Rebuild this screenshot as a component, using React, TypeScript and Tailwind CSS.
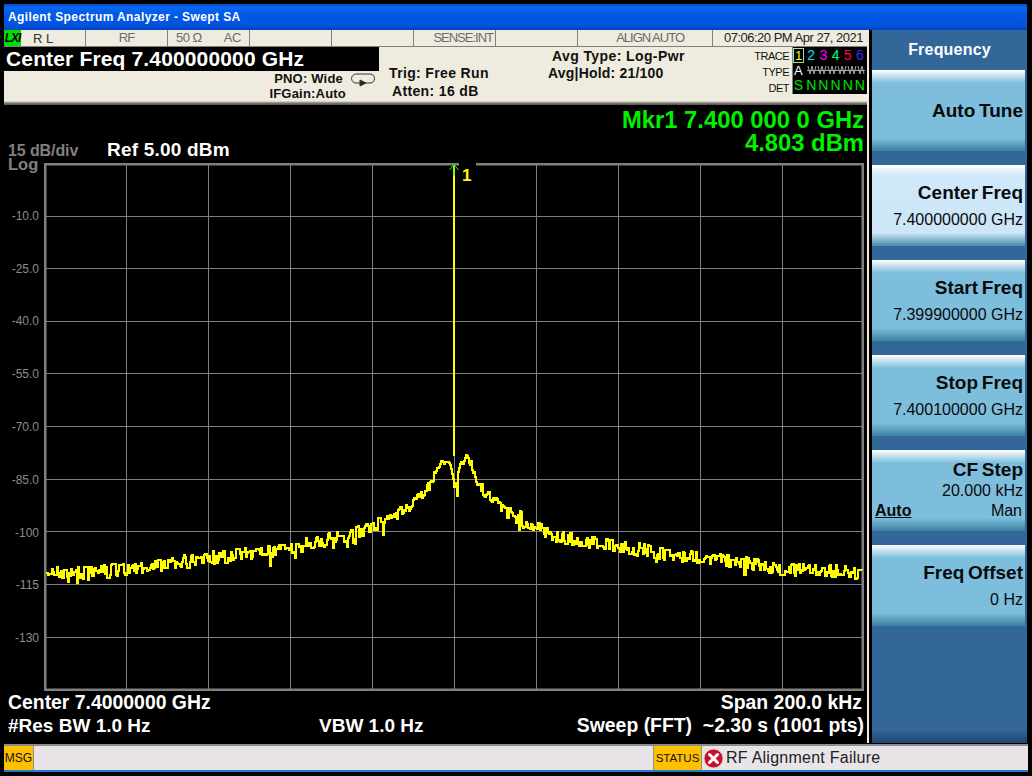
import React from "react";

const TOP = 163;
const LEFT = 44;

// envelope of the trace, in page coordinates
const envelope: [number, number][] = [
  [46, 573], [100, 572], [150, 566], [200, 559], [250, 553], [300, 546], [340, 537], [375, 526],
  [400, 512], [415, 500], [425, 490], [432, 480], [437, 466], [440, 458], [445, 460], [449, 466],
  [452, 480], [456, 480], [459, 466], [463, 458], [468, 459], [471, 466], [476, 482], [482, 492],
  [490, 500], [505, 512], [525, 523], [550, 535], [580, 541], [620, 547], [660, 553], [700, 558],
  [740, 563], [780, 569], [820, 571], [862, 573],
];

function envAt(x: number) {
  for (let i = 0; i < envelope.length - 1; i++) {
    const [x0, y0] = envelope[i];
    const [x1, y1] = envelope[i + 1];
    if (x >= x0 && x <= x1) return y0 + ((y1 - y0) * (x - x0)) / (x1 - x0);
  }
  return 573;
}

function buildTrace() {
  let seed = 71;
  const rand = () => {
    seed = (seed * 16807) % 2147483647;
    return seed / 2147483647;
  };
  let d = `M2 ${envAt(46) - TOP}`;
  let n = 0;
  for (let x = 46; x < 862; x += 1) {
    const central = x > 436 && x < 472;
    // hold the last value now and then, the real trace is blocky
    if (rand() > 0.3) {
      n = (rand() - 0.5) * (central ? 10 : 13);
      if (!central && rand() > 0.9) n += rand() * 16 - 4;
      if (central && rand() > 0.8) n += rand() * 16;
    }
    d += `H${x - LEFT + 1}V${(envAt(x) + n - TOP).toFixed(1)}`;
  }
  return d;
}

const trace = buildTrace();
const vLines = [82, 164, 246, 328, 410, 492, 574, 656, 738];
const hLines = [53, 105, 158, 210, 263, 316, 368, 421, 474];
const yLabels = ["-10.0", "-25.0", "-40.0", "-55.0", "-70.0", "-85.0", "-100", "-115", "-130", ""];

function Softkey({
  title,
  value,
  selected,
  children,
}: {
  title: string;
  value?: string;
  selected?: boolean;
  children?: React.ReactNode;
}) {
  const bg = selected
    ? "bg-[linear-gradient(#ffffff_0px,#cfe8fa_11px,#cce6f8_68px,#4f93b0_80px)]"
    : "bg-[linear-gradient(#ffffff_0px,#7dbedd_13px,#7dbedd_68px,#3f86a4_80px)]";
  return (
    <div className={`h-[81px] w-[153px] pr-[2px] text-right text-[#0a0a0a] flex flex-col ${bg}`}>
      <div className={`font-bold text-[19px] leading-[22px] [word-spacing:-1.5px] ${children ? "mt-[9px]" : value ? "mt-[17px]" : "mt-[30px]"}`}>
        {title}
      </div>
      {value && <div className={`text-[16px] leading-[18px] ${children ? "mt-[1px]" : "mt-[7px]"}`}>{value}</div>}
      {children}
    </div>
  );
}

export default function App() {
  return (
    <div className="w-[1032px] h-[776px] bg-black pt-1 pl-1 flex flex-col overflow-hidden [font-family:'Liberation_Sans',sans-serif]">
      <div className="h-[26px] w-[1023px] pl-1 flex items-center text-white font-bold text-[12px] tracking-[0.4px] bg-[linear-gradient(#0447c4_0px,#0a66f0_3px,#0358e6_12px,#0254e0_21px,#0342bc_26px)]">
        Agilent Spectrum Analyzer - Swept SA
      </div>

      <div className="flex h-[713px]">
        <div className="w-[863px] flex flex-col">
          {/* status strip */}
          <div className="h-[17px] flex bg-[#efebde] border-b border-[#808080] text-[13px] leading-[15px] text-[#6b6b6b] tracking-[-1px] whitespace-nowrap">
            <div className="w-[82px] border-r border-[#808080] flex items-center">
              <span className="w-[17px] h-[16px] bg-[#00e000] text-black font-bold italic text-[12px] leading-[16px] text-center">LXI</span>
              <span className="ml-[12px] text-[#333] tracking-[0px]">R L</span>
            </div>
            <div className="w-[82px] border-r border-[#808080] text-center">RF</div>
            <div className="w-[82px] border-r border-[#808080] flex pl-[8px] gap-[22px] tracking-[-0.5px]">
              <span>50 Ω</span>
              <span>AC</span>
            </div>
            <div className="w-[82px] border-r border-[#808080]" />
            <div className="w-[82px] border-r border-[#808080]" />
            <div className="w-[82px] border-r border-[#808080] text-right pr-[2px]">SENSE:INT</div>
            <div className="w-[82px] border-r border-[#808080]" />
            <div className="w-[135px] border-r border-[#808080] text-right pr-[28px]">ALIGN AUTO</div>
            <div className="flex-1 text-right pr-1 text-[#222] tracking-[-0.5px]">07:06:20 PM Apr 27, 2021</div>
          </div>

          {/* settings header */}
          <div className="h-[58px] flex bg-[#efebde] text-[#111] font-bold text-[14px] leading-[17px] bg-[linear-gradient(#efebde_54px,#807d76_56px,#55534f_58px)]">
            <div className="w-[375px] flex flex-col">
              <div className="h-[24px] bg-black text-white text-[21px] leading-[24px] pl-[2px] tracking-[0.15px]">
                Center Freq 7.400000000 GHz
              </div>
              <div className="flex justify-end items-start">
                <div className="text-right text-[13px] tracking-[0.2px] leading-[15px]">
                  <div className="pr-[3px]">PNO: Wide</div>
                  <div>IFGain:Auto</div>
                </div>
                <svg className="w-[24px] h-[14px] ml-[5px] mt-[2px] mr-[4px]" viewBox="0 0 24 14" fill="none" stroke="#333" strokeWidth="1">
                  <path d="M5 1H19C22 1 23.500 3 23.500 5.500C23.500 8 22 10 19 10H5C3 10 0.500 8 0.500 5.500C0.500 3 3 1 5 1Z" />
                  <path d="M9 7L15 10L9 13Z" fill="#222" />
                </svg>
              </div>
            </div>
            <div className="w-[161px] pl-[10px] pt-[17px] leading-[18px] tracking-[0.35px]">
              <div>Trig: Free Run</div>
              <div className="pl-[3px]">Atten: 16 dB</div>
            </div>
            <div className="w-[203px] pt-[1px] leading-[17px]">
              <div className="pl-[12px] tracking-[0.4px]">Avg Type: Log-Pwr</div>
              <div className="pl-[8px] tracking-[0.2px]">Avg|Hold: 21/100</div>
            </div>
            <div className="flex-1 flex h-[47px]">
              <div className="flex-1 text-right text-[11px] font-normal tracking-[-0.5px] leading-[16px] pt-[1px]">
                <div>TRACE</div>
                <div>TYPE</div>
                <div>DET</div>
              </div>
              <div className="ml-[3px] w-[75px] bg-black border-l border-[#808080] text-[14px] font-normal leading-[15px] pr-[1px]">
                <div className="grid grid-cols-6 text-center pt-[1px] h-[16px]">
                  <span className="w-[11px] h-[15px] border border-[#a0e0a0] text-[#ffff00] text-[13px] leading-[13px]">1</span>
                  <span className="text-[#00e0ff]">2</span>
                  <span className="text-[#ff00ff]">3</span>
                  <span className="text-[#00ff80]">4</span>
                  <span className="text-[#ff0040]">5</span>
                  <span className="text-[#4020ff]">6</span>
                </div>
                <div className="flex h-[15px] items-center pl-[1px]">
                  <span className="text-white text-[13px] w-[13px]">A</span>
                  <svg className="w-[58px] h-[11px]" viewBox="0 0 58 11" fill="none" stroke="#a8a8a8" strokeWidth="1">
                    <path d="M0 5.500H58" />
                    <path d="M1 1L3 9L5 1L7 9L9 1M11 1L13 9L15 1L17 9L19 1M21 1L23 9L25 1L27 9L29 1M31 1L33 9L35 1L37 9L39 1M41 1L43 9L45 1L47 9L49 1M51 1L53 9L55 1L57 9" />
                  </svg>
                </div>
                <div className="grid grid-cols-6 text-center text-[#00e000]">
                  <span className="w-[11px]">S</span>
                  <span>N</span>
                  <span>N</span>
                  <span>N</span>
                  <span>N</span>
                  <span>N</span>
                </div>
              </div>
            </div>
          </div>

          {/* readouts above the graticule */}
          <div className="h-[58px] flex justify-between">
            <div className="self-end pl-1 flex flex-col relative -mb-[7px]">
              <div className="flex items-baseline">
                <span className="w-[99px] text-[16px] tracking-[-0.1px] font-bold leading-[17px] text-[#808080]">15 dB/div</span>
                <span className="text-white font-bold text-[19px] tracking-[0.2px] leading-[17px]">Ref 5.00 dBm</span>
              </div>
              <div className="text-[16.500px] leading-[11px] text-[#808080] font-bold">Log</div>
            </div>
            <div className="text-right text-[#00f000] font-bold text-[23.800px] leading-[23px] pr-[3px] pt-[3px]">
              <div>Mkr1 7.400 000 0 GHz</div>
              <div>4.803 dBm</div>
            </div>
          </div>

          {/* graticule */}
          <div className="flex h-[528px]">
            <div className="w-[40px] grid grid-rows-[repeat(10,1fr)] text-[12px] leading-[14px] text-[#8c8c8c] text-right pr-[5px]">
              {yLabels.map((l, i) => (
                <div key={i} className="flex items-end justify-end">
                  <span className="translate-y-[7px]">{l}</span>
                </div>
              ))}
            </div>
            <div className="relative w-[820px]">
              <svg className="block" width="820" height="528" viewBox="0 0 820 528">
                <rect x="1" y="1" width="818" height="526" fill="none" stroke="#808080" strokeWidth="3" />
                <g stroke="#808080" strokeWidth="1" shapeRendering="crispEdges">
                  {vLines.map((x) => (
                    <line key={x} x1={x + 0.5} x2={x + 0.5} y1="2" y2="526" />
                  ))}
                  {hLines.map((y) => (
                    <line key={y} x1="2" x2="818" y1={y + 0.5} y2={y + 0.5} />
                  ))}
                </g>
                <rect x="415" y="0" width="17" height="3" fill="#000" />
                <path d={trace} fill="none" stroke="#ffff00" strokeWidth="2" strokeLinejoin="miter" shapeRendering="crispEdges" />
                <path d="M410 293V2" stroke="#ffff00" strokeWidth="2" />
                <path d="M405.500 7L410 1.500L414.500 7M410 2V13" fill="none" stroke="#20f020" strokeWidth="1" />
              </svg>
              <span className="absolute left-[418px] top-[3px] text-[#ffff00] font-bold text-[17px] leading-[20px]">1</span>
            </div>
          </div>

          {/* sweep readouts */}
          <div className="flex-1 text-white font-bold text-[19.400px] leading-[23px] pl-1 pr-[3px]">
            <div className="flex justify-between pr-[2px]">
              <span>Center 7.4000000 GHz</span>
              <span>Span 200.0 kHz</span>
            </div>
            <div className="flex">
              <span className="w-[311px] text-[19px]">#Res BW&nbsp;1.0 Hz</span>
              <span className="text-[19px]">VBW&nbsp;1.0 Hz</span>
              <span className="ml-auto">Sweep (FFT)&nbsp; ~2.30 s (1001 pts)</span>
            </div>
          </div>
        </div>

        <div className="w-[2px] bg-[#efebde]" />
        <div className="w-[3px] bg-black" />

        {/* softkey menu */}
        <div className="w-[155px] bg-[linear-gradient(#336699_700px,#1f4570_713px)] flex flex-col">
          <div className="h-[40px] pt-[1px] text-white font-bold text-[16px] tracking-[0.2px] text-center leading-[38px]">Frequency</div>
          <div className="flex flex-col gap-[14px]">
            <Softkey title="Auto Tune" />
            <Softkey title="Center Freq" value="7.400000000 GHz" selected />
            <Softkey title="Start Freq" value="7.399900000 GHz" />
            <Softkey title="Stop Freq" value="7.400100000 GHz" />
            <Softkey title="CF Step" value="20.000 kHz">
              <div className="flex justify-between text-[16px] leading-[22px] pl-[3px] pr-[1px]">
                <span className="font-bold underline">Auto</span>
                <span>Man</span>
              </div>
            </Softkey>
            <Softkey title="Freq Offset" value="0 Hz" />
          </div>
        </div>
      </div>

      {/* message bar */}
      <div className="h-[26px] mt-[1px] w-[1024px] flex items-stretch bg-[#e8e4e8] border-t-2 border-[#8c8c8c] text-[#111]">
        <div className="w-[30px] bg-[#ffc000] border-r border-[#909090] text-[12px] leading-[24px] text-center">MSG</div>
        <div className="w-[620px] border-r border-[#909090]" />
        <div className="w-[48px] bg-[#ffc000] border-r border-[#909090] text-[11.500px] leading-[24px] text-center">STATUS</div>
        <div className="flex items-center pl-[1px] text-[16px] text-[#222]">
          <svg className="w-[21px] h-[21px]" viewBox="0 0 21 21">
            <circle cx="10.500" cy="10.500" r="9.500" fill="#c8102e" stroke="#e8c8c8" strokeWidth="1" />
            <path d="M6.500 6.500L14.500 14.500M14.500 6.500L6.500 14.500" stroke="#fff" strokeWidth="3" strokeLinecap="round" />
          </svg>
          <span className="ml-[2px] tracking-[0.25px]">RF Alignment Failure</span>
        </div>
      </div>
      <div className="h-[2px] w-[1024px] bg-[#2f74d0]" />
    </div>
  );
}
